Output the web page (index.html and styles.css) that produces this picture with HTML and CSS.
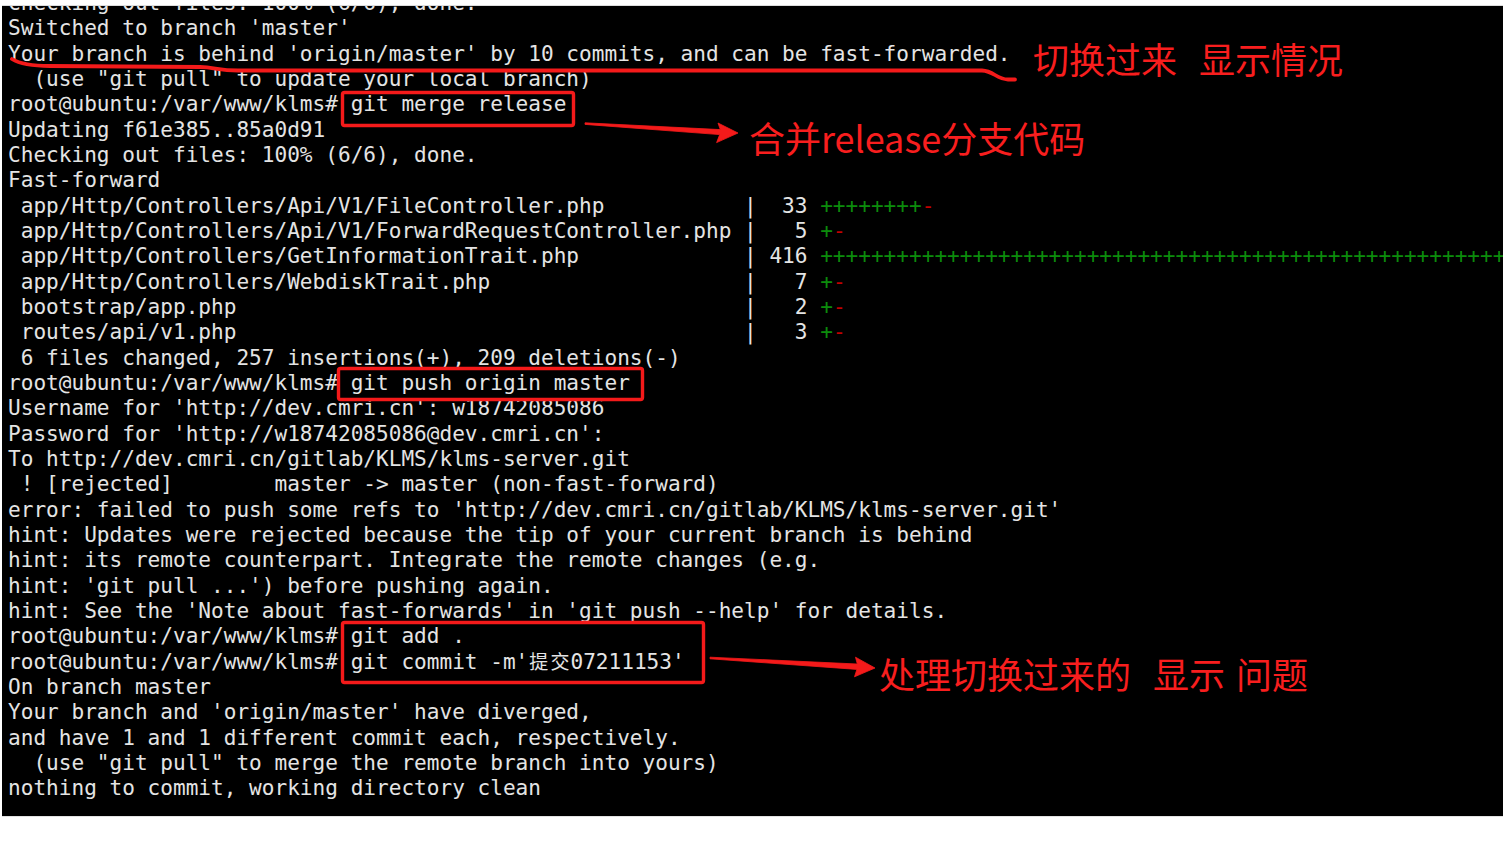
FILE: index.html
```html
<!DOCTYPE html>
<html lang="en">
<head>
<meta charset="utf-8">
<title>git terminal</title>
<link rel="stylesheet" href="styles.css">
</head>
<body>
<div class="page">
  <div class="term">
<pre class="out">Checking out files: 100% (6/6), done.
Switched to branch 'master'
Your branch is behind 'origin/master' by 10 commits, and can be fast-forwarded.
  (use "git pull" to update your local branch)
root@ubuntu:/var/www/klms# git merge release
Updating f61e385..85a0d91
Checking out files: 100% (6/6), done.
Fast-forward
 app/Http/Controllers/Api/V1/FileController.php           |  33 <span class="add">++++++++</span><span class="del">-</span>
 app/Http/Controllers/Api/V1/ForwardRequestController.php |   5 <span class="add">+</span><span class="del">-</span>
 app/Http/Controllers/GetInformationTrait.php             | 416 <span class="add">++++++++++++++++++++++++++++++++++++++++++++++++++++++++++++++</span>
 app/Http/Controllers/WebdiskTrait.php                    |   7 <span class="add">+</span><span class="del">-</span>
 bootstrap/app.php                                        |   2 <span class="add">+</span><span class="del">-</span>
 routes/api/v1.php                                        |   3 <span class="add">+</span><span class="del">-</span>
 6 files changed, 257 insertions(+), 209 deletions(-)
root@ubuntu:/var/www/klms# git push origin master
Username for 'http://dev.cmri.cn': w18742085086
Password for 'http://w18742085086@dev.cmri.cn':
To http://dev.cmri.cn/gitlab/KLMS/klms-server.git
 ! [rejected]        master -> master (non-fast-forward)
error: failed to push some refs to 'http://dev.cmri.cn/gitlab/KLMS/klms-server.git'
hint: Updates were rejected because the tip of your current branch is behind
hint: its remote counterpart. Integrate the remote changes (e.g.
hint: 'git pull ...') before pushing again.
hint: See the 'Note about fast-forwards' in 'git push --help' for details.
root@ubuntu:/var/www/klms# git add .
root@ubuntu:/var/www/klms# git commit -m'<span class="wide">提</span><span class="wide">交</span>07211153'
On branch master
Your branch and 'origin/master' have diverged,
and have 1 and 1 different commit each, respectively.
  (use "git pull" to merge the remote branch into yours)
nothing to commit, working directory clean
</pre>
  </div>

  <svg class="marks" width="1503" height="843" viewBox="0 0 1503 843" xmlns="http://www.w3.org/2000/svg">
    <path class="line" d="M12,59 C20,64 30,66 50,66 L200,67 C214,67 218,70.5 238,70.5 L982,70.5 C994,71 996,79 1008,79.5 L1015,79.5"/>
    <rect class="box" x="342.5" y="92.5" width="231" height="33" rx="2"/>
    <rect class="box" x="338.5" y="368.5" width="304" height="31" rx="2"/>
    <rect class="box" x="342.5" y="622.5" width="361" height="60" rx="2"/>
    <polygon class="arrow" points="585,122.8 720.3,129.6 718,123 738,133 716.6,142.6 719.7,134.6 585,124.4"/>
    <polygon class="arrow" points="710,657.2 857.3,664 855.5,657.2 875,668 854.5,676.8 856.9,669.4 710,658.8"/>
  </svg>

  <div class="note note-1"><span>切换过来</span><span>显示情况</span></div>
  <div class="note note-2"><span>合并release分支代码</span></div>
  <div class="note note-3"><span>处理切换过来的</span><span>显示</span><span class="tight">问题</span></div>
</div>
</body>
</html>
```

FILE: styles.css
```css
html, body {
  margin: 0;
  padding: 0;
  background: #ffffff;
}

.page {
  position: relative;
  width: 1503px;
  height: 843px;
  padding: 5px 0 0 2px;
  box-sizing: border-box;
  overflow: hidden;
}

.term {
  background: #000000;
  height: 812px;
  border-top: 1px solid #dcdcdc;
  border-bottom: 1px solid #e2e2e2;
  padding-left: 6px;
  overflow: hidden;
  box-sizing: border-box;
}

.out {
  margin: -16px 0 0 0;
  font-family: "DejaVu Sans Mono", "Liberation Mono", monospace;
  font-size: 21.08px;
  line-height: 25.33px;
  color: #e4e4e4;
  white-space: pre;
}

.add { color: #0c8c0c; }
.del { color: #c40000; }

.wide {
  display: inline-block;
  width: 2ch;
  text-align: center;
  font-family: "Noto Sans CJK SC", sans-serif;
  font-size: 19px;
  line-height: 1;
}

.marks {
  position: absolute;
  left: 0;
  top: 0;
  pointer-events: none;
}

.line {
  fill: none;
  stroke: #f41a1a;
  stroke-width: 3.8;
  stroke-linecap: round;
  stroke-linejoin: round;
}

.box {
  fill: none;
  stroke: #f41a1a;
  stroke-width: 3.4;
}

.arrow {
  fill: #f41a1a;
  stroke: #f41a1a;
  stroke-width: 0.8;
  stroke-linejoin: round;
}

.note {
  position: absolute;
  display: flex;
  gap: 22px;
  font-family: "Noto Sans CJK SC", sans-serif;
  font-size: 36px;
  line-height: 36px;
  color: #f81e1e;
  white-space: nowrap;
}

.note-1 { left: 1033px; top: 40px; }
.note-2 { left: 749px; top: 119px; }
.note-3 { left: 879px; top: 655px; }
.note-3 .tight { margin-left: -11px; }
```
